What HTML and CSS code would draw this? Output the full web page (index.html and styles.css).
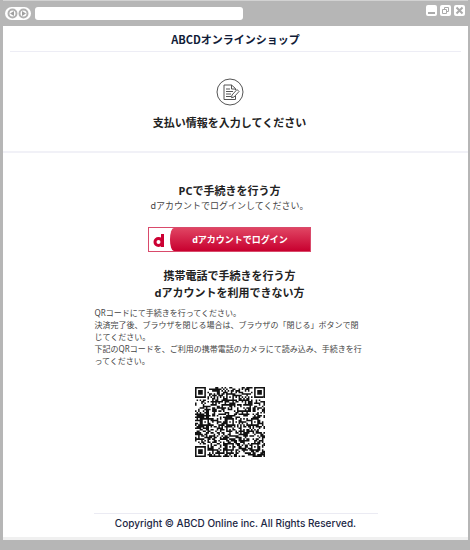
FILE: index.html
```
<!DOCTYPE html>
<html lang="ja">
<head>
    <meta charset="UTF-8">
    <meta name="viewport" content="width=device-width, initial-scale=1.0">
    <title>ABCDオンラインショップ</title>
    <link rel="stylesheet" href="styles.css">
</head>
<body>
    <div class="toolbar">
        <div class="nav-buttons">
            <button type="button" aria-label="戻る">
                <svg width="11" height="11" viewBox="0 0 11 11"><circle cx="5.5" cy="5.5" r="4"/><path d="M7 3v5L3 5.500z"/></svg>
            </button>
            <button type="button" aria-label="進む">
                <svg width="11" height="11" viewBox="0 0 11 11"><circle cx="5.5" cy="5.5" r="4"/><path d="M4 3v5l4-2.500z"/></svg>
            </button>
        </div>
        <input class="address" type="text" aria-label="アドレス">
        <div class="window-buttons">
            <button type="button" aria-label="最小化">
                <svg width="11" height="11" viewBox="0 0 11 11"><path class="bold" d="M2 8h7"/></svg>
            </button>
            <button type="button" aria-label="元に戻す">
                <svg width="11" height="11" viewBox="0 0 11 11"><path d="M2.5 4.5h4v4h-4zM4.500 4.500v-2h4v4h-2"/></svg>
            </button>
            <button type="button" aria-label="閉じる">
                <svg width="11" height="11" viewBox="0 0 11 11"><path class="bold" d="M2.500 2.500l6 6M8.500 2.500l-6 6"/></svg>
            </button>
        </div>
    </div>

    <div class="page">
        <header class="shop-header">
            <h1>ABCDオンラインショップ</h1>
        </header>

        <section class="intro">
            <svg class="intro-icon" width="28" height="28" viewBox="0 0 28 28">
                <circle cx="14" cy="14" r="13"/>
                <path d="M19.500 12v-1.500l-4-3.500h-7.500v14.500h11.500v-3.500M15.500 7v4h4"/>
                <path d="M10 11h4M10 13.500h7M10 16h5M10 18.500h5"/>
                <path d="M21 11.500l2 2-5 5.500-2.500.7.5-2.700z"/>
            </svg>
            <h2>支払い情報を入力してください</h2>
        </section>

        <main>
            <h3>PCで手続きを行う方</h3>
            <p class="lead">dアカウントでログインしてください。</p>
            <button type="button" class="login">
                <span class="login-mark">
                    <svg width="21" height="23" viewBox="0 0 21 23"><circle cx="9.500" cy="14" r="3.500"/><path d="M13.500 6v13"/></svg>
                </span>
                <span class="login-label">dアカウントでログイン</span>
            </button>

            <h3>携帯電話で手続きを行う方<br>dアカウントを利用できない方</h3>
            <p class="note">QRコードにて手続きを行ってください。<br>
                決済完了後、ブラウザを閉じる場合は、ブラウザの「閉じる」ボタンで閉じてください。<br>
                下記のQRコードを、ご利用の携帯電話のカメラにて読み込み、手続きを行ってください。</p>
            <svg class="qr" width="70" height="70" viewBox="0 0 45 45" role="img" aria-label="QRコード"><path id="qr-modules"/></svg>
        </main>

        <footer>Copyright © ABCD Online inc. All Rights Reserved.</footer>
    </div>

    <script src="script.js"></script>
</body>
</html>
```

FILE: styles.css
```
* {
    box-sizing: border-box;
}
body {
    margin: 0;
    padding: 0 2px 10px 3px;
    min-height: 100vh;
    display: flex;
    flex-direction: column;
    background-color: #b6b6b6;
    color: #222;
    font-family: "Noto Sans", "Noto Sans CJK JP", sans-serif;
}
h1, h2, h3, p {
    margin: 0;
}
button {
    margin: 0;
    padding: 0;
    border: 0;
    font-family: inherit;
    cursor: pointer;
}
svg {
    display: block;
}

/* ブラウザ枠 */
.toolbar {
    display: flex;
    align-items: flex-start;
    height: 26px;
    border-top: 1px solid #d2d2d2;
}
.nav-buttons {
    display: flex;
    align-items: center;
    margin: 6px 4px 0 2px;
    padding: 0 2px;
    height: 13px;
    border-radius: 7px;
    background-color: #fff;
}
.nav-buttons button {
    background: none;
}
.nav-buttons circle {
    fill: none;
    stroke: #b0b0b0;
    stroke-width: 2;
}
.nav-buttons path {
    fill: #a0a0a0;
}
.address {
    flex: 0 1 208px;
    min-width: 0;
    height: 13px;
    margin-top: 6px;
    padding: 0 4px;
    border: 0;
    border-radius: 3px;
    background-color: #fff;
    font-size: 9px;
}
.window-buttons {
    display: flex;
    gap: 3px;
    margin: 4px 3px 0 auto;
}
.window-buttons button {
    border-radius: 2px;
    background-color: #fff;
}
.window-buttons path {
    fill: none;
    stroke: #aaa;
}
.window-buttons .bold {
    stroke-width: 2;
}

/* 本文 */
.page {
    flex: 1;
    display: flex;
    flex-direction: column;
    background-color: #fff;
    border-bottom: 3px solid #f0f0f0;
}
.shop-header {
    margin: 0 7px;
    height: 26px;
    border-bottom: 1px solid #ededf5;
    text-align: center;
}
.shop-header h1 {
    font-family: "Noto Sans CJK JP", sans-serif;
    font-size: 11px;
    font-weight: 700;
    line-height: 26px;
    color: #111c38;
}
.intro {
    display: flex;
    flex-direction: column;
    align-items: center;
    gap: 8px;
    padding: 26px 12px 20px 0;
    border-bottom: 2px solid #f1f1f7;
}
.intro-icon {
    fill: none;
    stroke: #555;
}
.intro h2,
h3 {
    font-size: 11px;
    font-weight: 700;
    line-height: 17px;
    text-align: center;
}
main {
    display: flex;
    flex-direction: column;
    align-items: center;
    padding: 29px 12px 0 0;
}
.lead {
    font-size: 9px;
    line-height: 14px;
    color: #444;
}
.login {
    display: flex;
    width: 163px;
    height: 25px;
    margin: 14px 0 15px;
    border: 1px solid #d94a6b;
    background-color: #fff;
    color: #fff;
}
.login-mark {
    flex: 0 0 21px;
}
.login-mark svg {
    fill: none;
    stroke: #cc0033;
    stroke-width: 3;
}
.login-label {
    flex: 1;
    border-radius: 4px 0 0 4px / 12px 0 0 12px;
    background-image: linear-gradient(#e04563, #c8002f);
    font-size: 9px;
    font-weight: 700;
    line-height: 23px;
}
.note {
    width: 100%;
    max-width: 270px;
    margin-top: 6px;
    font-size: 8px;
    line-height: 12px;
    color: #444;
}
.qr {
    margin-top: 20px;
    fill: #111;
}
footer {
    width: 100%;
    max-width: 284px;
    margin: auto auto 5px;
    border-top: 1px solid #ebebf3;
    font-family: Inter, sans-serif;
    font-size: 10px;
    font-weight: 500;
    line-height: 18px;
    text-align: center;
    color: #1c2744;
}
```

FILE: script.js
```
const SIZE = 45;
const finders = [[3, 3], [41, 3], [3, 41]];
const alignments = [[22, 6], [6, 22], [22, 22], [38, 22], [22, 38], [38, 38]];

const ring = (x, y, center) => Math.max(Math.abs(x - center[0]), Math.abs(y - center[1]));

let seed = 7;
const random = () => {
    seed = (seed * 16807) % 2147483647;
    return seed / 2147483647;
};

const isDark = (x, y) => {
    const data = random() < 0.54;
    for (const center of finders) {
        const d = ring(x, y, center);
        if (d <= 4) return d !== 2 && d !== 4;
    }
    for (const center of alignments) {
        const d = ring(x, y, center);
        if (d <= 2) return d !== 1;
    }
    if (x === 6 || y === 6) return (x + y) % 2 === 0;
    return data;
};

let path = '';
for (let y = 0; y < SIZE; y++) {
    for (let x = 0; x < SIZE; x++) {
        if (isDark(x, y)) path += `M${x} ${y}h1v1h-1z`;
    }
}
document.getElementById('qr-modules').setAttribute('d', path);
```
